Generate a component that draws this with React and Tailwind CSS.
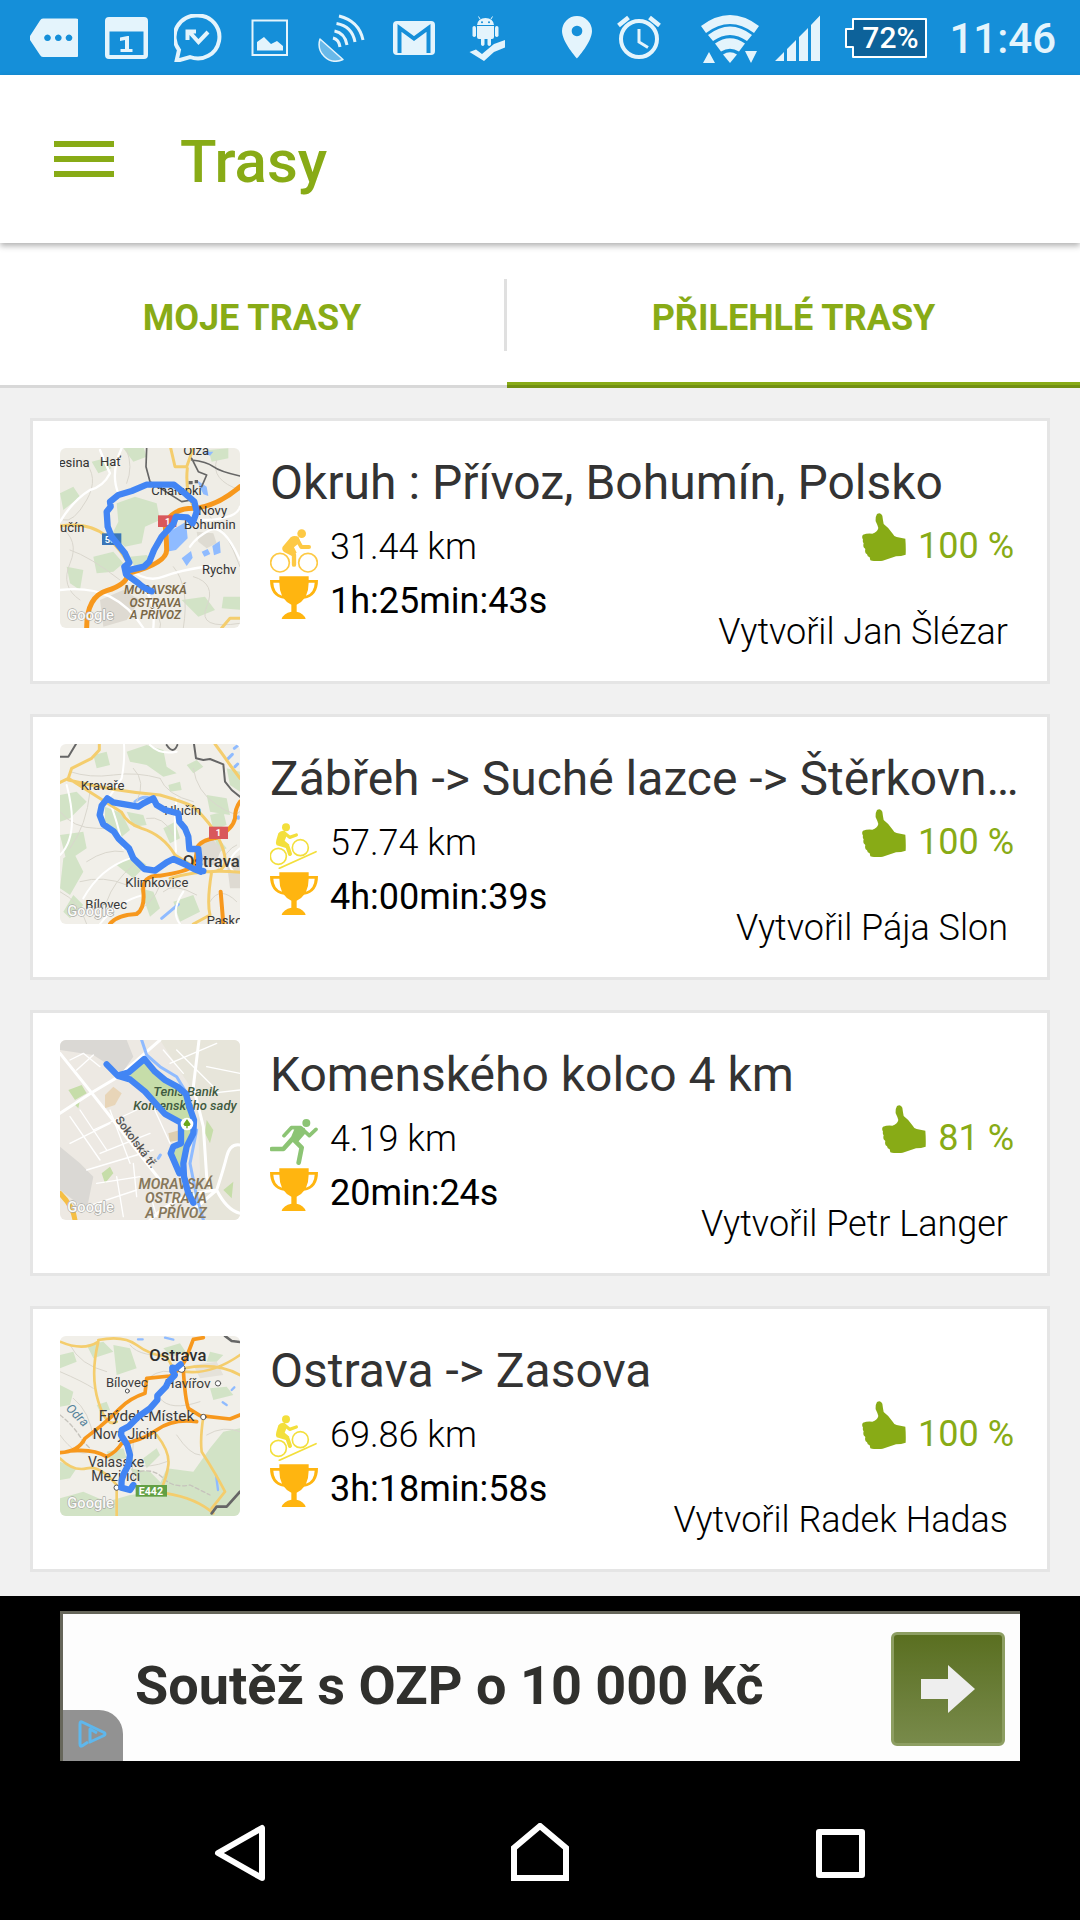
import React from "react";

const ICE = "#e4f4fc";

/* ---------- status bar ---------- */

function StatusIcon({ children }) {
  return (
    <svg viewBox="0 0 48 48" className="h-12 w-12 shrink-0" fill={ICE} aria-hidden="true">
      {children}
    </svg>
  );
}

function StatusBar() {
  return (
    <div className="flex h-[75px] items-center justify-between bg-[#158fd9] pr-6 pl-[30px]">
      <div className="flex gap-6">
        <StatusIcon>
          <path
            fillRule="evenodd"
            d="M13 4.5H46a3 3 0 0 1 3 3V40a3 3 0 0 1-3 3H13q-2 0-3-2L0 26v-4L10 6.500q1-2 3-2ZM17.500 20.500a3.300 3.300 0 1 0 .01 0ZM28.300 20.500a3.300 3.300 0 1 0 .01 0ZM39 20.500a3.300 3.300 0 1 0 .01 0Z"
          />
        </StatusIcon>
        <StatusIcon>
          <path
            fillRule="evenodd"
            d="M7 3H42a4 4 0 0 1 4 4V41a4 4 0 0 1-4 4H7a4 4 0 0 1-4-4V7a4 4 0 0 1 4-4ZM7.500 17.500V41H41.500V17.500Z"
          />
          <path d="M18 23.500 25.500 22H27V35h3.500v3H18.500V35H23V26l-5 1Z" />
        </StatusIcon>
        <StatusIcon>
          <path
            d="M24 1.500A21.500 21.500 0 1 1 16 43L2.500 47 5 36A21.500 21.500 0 0 1 24 1.500Z"
            fill="none"
            stroke={ICE}
            strokeWidth="4"
          />
          <path d="M15 17.500 24.500 28 34 18M13.500 26V17.500H22" fill="none" stroke={ICE} strokeWidth="4" />
        </StatusIcon>
        <StatusIcon>
          <path d="M6.500 6.500H41V41H6.500Z" fill="none" stroke={ICE} strokeWidth="2" />
          <path d="M11 36.500V28l7-5 7 7 6-3 6 5v4.500Z" />
        </StatusIcon>
        <StatusIcon>
          <path
            d="M2 25C-2 38 10 52 25 45.500Z"
            fill="#69b9e9"
            stroke={ICE}
            strokeWidth="1.500"
            strokeLinejoin="round"
          />
          <g fill="none" stroke={ICE} strokeWidth="3">
            <path d="M15 24Q21 25.500 22 33" />
            <path d="M16.500 17Q27 19 29 31" />
            <path d="M18.500 9.500Q34 12 37 28" />
            <path d="M21 2Q41 7 45 26" />
          </g>
        </StatusIcon>
        <StatusIcon>
          <rect x="3" y="7" width="42" height="34" rx="4" />
          <path d="M9.500 39V14L24 24.500 38.500 14V39" fill="none" stroke="#158fd9" strokeWidth="4" />
        </StatusIcon>
        <StatusIcon>
          <path d="M15 11q1-7 8.500-7t8.500 7ZM15 12H32V23a2 2 0 0 1-2 2h-1v5.500a1.800 1.800 0 0 1-3.500 0V25h-3v5.500a1.800 1.800 0 0 1-3.500 0V25h-2a2 2 0 0 1-2-2Z" />
          <rect x="10.500" y="12" width="3.500" height="11" rx="1.700" />
          <rect x="33" y="12" width="3.500" height="11" rx="1.700" />
          <path d="M18 5 16.500 2.500M29 5l1.500-2.500" stroke={ICE} strokeWidth="1" />
          <path d="M7.500 38 14 35.500l6 4.500L32 30l11-4v7.500L32 38 22 47Z" />
          <circle cx="20" cy="8.200" r="1" fill="#158fd9" />
          <circle cx="27" cy="8.200" r="1" fill="#158fd9" />
        </StatusIcon>
      </div>
      <div className="flex items-center">
        <svg viewBox="0 0 32 48" className="mr-6 h-12 w-8" fill={ICE} aria-hidden="true">
          <path
            fillRule="evenodd"
            d="M16 2A15 15 0 0 0 1 17C1 28 16 44.500 16 44.500S31 28 31 17A15 15 0 0 0 16 2ZM16 11.700a5.300 5.300 0 1 1-.01 0Z"
          />
        </svg>
        <svg viewBox="0 0 44 48" className="mr-[39px] h-12 w-11" fill="none" stroke={ICE} aria-hidden="true">
          <circle cx="22" cy="25" r="18" strokeWidth="4" />
          <path d="M22 15v13l9 5.500" strokeWidth="3" />
          <path d="M1.500 11.500 11.500 3.500M32.500 3.500l10 8" strokeWidth="4.500" />
        </svg>
        <svg viewBox="0 0 60 50" className="mr-[15px] h-[50px] w-[60px]" fill={ICE} aria-hidden="true">
          <path d="M1 13Q30-9 59 13L54 20Q30 2 6 20Z" />
          <path d="M8 22Q30 5 52 22L47 28Q30 16 13 28Z" />
          <path d="M15 30.500Q30 20 45 30.500L39 38.500Q30 33 21 38.500Z" />
          <path d="M23 41.500Q30 37 37 41.500L30 50Z" />
          <path d="M3 50 9 39l6 11ZM45 38H57L51 50Z" />
        </svg>
        <svg viewBox="0 0 46 48" className="mr-6 h-12 w-[46px]" fill={ICE} aria-hidden="true">
          <path d="M0 47 9 38v9ZM12 35l9-9V47H12ZM24 23l9-9V47H24ZM36 11 45 1.500V47H36Z" />
        </svg>
        <div className="mr-[22px] grid h-10 w-[82px] items-center justify-items-center">
          <svg viewBox="0 0 82 40" className="col-start-1 row-start-1 h-10 w-[82px]" aria-hidden="true">
            <path d="M8 1H81V39H8V29H1V11H8Z" fill="#0d629a" stroke="#fff" strokeWidth="2" strokeLinejoin="round" />
          </svg>
          <span className="col-start-1 row-start-1 pl-2 text-[30px] leading-10 font-medium text-white">72%</span>
        </div>
        <span className="pt-[3px] text-[42px] leading-[48px] font-medium text-[#e4f4fc]">11:46</span>
      </div>
    </div>
  );
}

/* ---------- map thumbnails ---------- */

function Map({ box, label, land, children }) {
  return (
    <svg
      viewBox={box}
      role="img"
      aria-label={label}
      className="h-[180px] w-[180px] shrink-0 rounded-md font-['Roboto',sans-serif]"
      strokeLinecap="round"
      strokeLinejoin="round"
      fill="none"
    >
      <rect x="0" y="0" width="600" height="600" fill={land} />
      {children}
    </svg>
  );
}

function Route({ d }) {
  return <path d={d} stroke="#4285f4" strokeWidth="19" />;
}

function Google({ y }) {
  return (
    <text
      x="52"
      y={y}
      fontSize="44"
      fontWeight="500"
      fill="#fafaf8"
      stroke="#a9a9a4"
      strokeWidth="4"
      paintOrder="stroke"
    >
      Google
    </text>
  );
}

function MapOkruh() {
  return (
    <Map box="30 24 540 540" label="Okruh : Přívoz, Bohumín, Polsko" land="#efede6">
      <g fill="#d2e3c6">
        <path d="M200 190l55-20 65 20 10 50-45 20-10 50-50 10-40-35 20-40ZM130 350l60-15 30 35-30 25-50 5ZM220 25l60-5 10 30-40 15ZM395 480l70-10 30 40-50 20ZM520 470h55v40l-60-5ZM30 160l40-20 20 30-50 40ZM125 65l40-10 20 30-40 15ZM50 380l50 10-10 60-30-20ZM475 30l60-5v30l-50 10ZM240 350l50-5 20 25-50 25Z" />
      </g>
      <path d="M440 275l50 5 10 30-30 15-25-20Z" fill="#dedbd2" />
      <path d="M150 480l70-30 50 30-40 60-70 20Z" fill="#dedad2" />
      <g fill="#8fbbff">
        <path d="M358 275l50-30 5 50-35 35-28 5ZM395 355l28-22 5 20-18 25ZM455 335l18-8 8 15-18 8ZM487 318l22-15 3 35-20 8ZM440 120l30 20 5 28-15-5ZM455 35l35 0-10 12Z" />
      </g>
      <g stroke="#d9d6cd" strokeWidth="3">
        <path d="M30 260Q90 300 60 370T90 480M100 60Q150 110 110 180T40 240M230 30Q250 80 230 130M430 410Q500 430 470 500T570 550M300 500Q340 540 330 564M370 380Q420 440 400 564M480 230Q530 270 570 380M60 330Q120 350 210 420M500 60Q480 120 570 150" />
      </g>
      <g stroke="#fff" strokeWidth="7">
        <path d="M150 30Q170 80 180 100Q160 140 120 150Q70 180 30 245M205 160Q180 100 215 24M235 385Q290 430 340 410T480 378M235 420Q320 440 310 564M420 320Q440 290 480 270T570 360M30 450Q120 440 180 470T280 564M450 240Q560 240 570 200" />
      </g>
      <g stroke="#f4cd6d" strokeWidth="9">
        <path d="M30 258Q120 245 170 290T238 380M362 24 375 80H410L430 24M412 85Q405 150 430 200M515 564 540 535H570" />
      </g>
      <path d="M110 564Q110 470 170 452T235 400Q350 370 350 330T345 250Q370 205 430 205Q500 200 570 140" stroke="#f7981d" strokeWidth="15" />
      <path d="M290 24 288 80 300 125 395 185 425 180M425 55l20 40 25 10-15 35M425 60Q470 65 490 80T570 108" stroke="#666" strokeWidth="5" />
      <path d="M416 123h12v10h-12ZM434 120h10v10h-10Z" fill="#666" />
      <g fill="#333" fontSize="39">
        <text x="26" y="80">esina</text>
        <text x="150" y="78">Hať</text>
        <text x="400" y="45">Olza</text>
        <text x="304" y="164">Chałupki</text>
        <text x="444" y="226">Novy</text>
        <text x="402" y="268">Bohumin</text>
        <text x="30" y="277">učín</text>
        <text x="456" y="401">Rychv</text>
      </g>
      <g fill="#7a6848" fontSize="36" fontStyle="italic" fontWeight="600" textAnchor="middle">
        <text x="316" y="463">MORAVSKÁ</text>
        <text x="316" y="500">OSTRAVA</text>
        <text x="316" y="536">A PŘÍVOZ</text>
      </g>
      <rect x="324" y="226" width="55" height="35" fill="#d9585b" />
      <text x="345" y="254" fontSize="28" fontWeight="700" fill="#fff">1</text>
      <rect x="156" y="280" width="58" height="35" fill="#3a76b8" />
      <text x="164" y="308" fontSize="28" fontWeight="700" fill="#fff">56</text>
      <Google y="540" />
      <Route d="M305 454Q280 445 262 427L228 403 223 380 238 368 225 340 205 315 185 290 173 260 170 215 182 200 180 185 205 165 245 153 290 134H372L402 158 433 185 440 215 428 250 412 232 378 230 370 252 335 290 312 330 298 365 282 380 230 392" />
    </Map>
  );
}

function MapZabreh() {
  return (
    <Map box="30 27 540 540" label="Zábřeh -> Suché lazce -> Štěrkovna" land="#f1efe9">
      <g fill="#d2e3c6">
        <path d="M230 50l60-20 50 15 10 50 30 20-40 10-50-35-50-10ZM30 180l50-10 30 30-50 50-30 10ZM30 300l70-10 10 50-60 40ZM40 370l30-20 30 60-40 70-30-20ZM200 390l50-30 40 30-40 40ZM130 60l40-10 10 40-40 10ZM470 180l60 10 10 50-60-10ZM410 90l30-15 20 20-30 20ZM480 240l40-10 10 40-40 15ZM340 280l35-20 15 50-30 15ZM270 460l40 10 20 50-30 25ZM370 500l60-20 20 50-60 30ZM530 100l40 10v60l-30-20ZM230 230l50 10 10 30-40 5ZM355 150l35-10 5 25-35 5ZM70 480l30 30-40 40-20-20ZM480 280l50 60-20 10Z" />
        <path d="M165 215l50 20 25 50-30 25-45-35Z" />
      </g>
      <path d="M445 330l40-20 30 30-20 50-45 0ZM530 380l40-20v100h-30Z" fill="#dedad2" />
      <g stroke="#8fbbff" strokeWidth="9">
        <path d="M255 200Q280 180 300 190M335 550 385 508M535 70l12-12M553 40l10-8M555 95l8-8M565 245v5" />
      </g>
      <g stroke="#d9d6cd" strokeWidth="3">
        <path d="M60 110Q120 130 190 120T330 130M30 230Q70 280 140 280T200 300M110 380Q170 340 220 350M250 100Q290 140 260 200M330 130Q350 180 430 200M430 100Q440 170 500 210T570 230M90 440Q160 420 230 450M170 500Q190 440 250 390M340 470Q370 440 440 480M240 540Q310 510 330 450M480 500Q510 450 560 500M30 470Q90 500 110 567M290 250Q340 240 370 300M120 170Q110 270 60 340M500 410Q530 340 560 330" />
      </g>
      <g stroke="#fff" strokeWidth="6">
        <path d="M222 27Q225 80 215 130L175 190M175 190Q200 250 220 340M380 190Q370 250 378 350M50 150Q90 300 30 360M100 490Q150 400 240 370M150 567Q200 500 280 480M300 30Q330 60 380 50M570 340Q520 380 550 410M400 470Q360 530 390 567" />
      </g>
      <g stroke="#f4cd6d" strokeWidth="9">
        <path d="M30 142 55 130Q180 210 215 232Q230 265 275 280Q340 300 375 360L440 400M55 130 65 100 125 70 148 45V27M55 135Q200 170 330 180Q400 200 430 215Q500 280 520 345T485 410M360 430Q460 400 570 412M485 410Q470 500 480 540L430 567M495 27Q520 60 540 90L570 130" />
      </g>
      <g stroke="#f7981d" strokeWidth="12">
        <path d="M180 567Q200 540 260 537Q285 520 280 470T330 422Q410 410 425 395T440 340Q450 315 500 308Q550 280 555 250Q555 220 570 200M512 470 520 567" />
      </g>
      <path d="M30 65H55L78 27M350 30Q370 60 382 30M432 27 438 70 460 75 480 72 520 88 525 140 545 165 570 185" stroke="#666" strokeWidth="6" />
      <g fill="#383838">
        <text x="92" y="165" fontSize="39">Kravaře</text>
        <text x="343" y="240" fontSize="39">Hlučín</text>
        <text x="226" y="456" fontSize="39">Klimkovice</text>
        <text x="106" y="522" fontSize="39">Bílovec</text>
        <text x="470" y="570" fontSize="39">Pasko</text>
        <text x="398" y="397" fontSize="50" fontWeight="500">Ostrava</text>
      </g>
      <rect x="477" y="275" width="57" height="37" fill="#d9585b" />
      <text x="497" y="303" fontSize="28" fontWeight="700" fill="#fff">1</text>
      <Google y="542" />
      <Route d="M453 410 432 402 410 390 370 372 350 382 315 407 283 402 250 370 237 340 205 310 192 290 160 268 149 240 155 212 172 190 190 202 265 215 280 205 310 190 320 210 345 225 385 235 388 260 405 280 415 305 418 342H445L448 370 447 405 460 408" />
    </Map>
  );
}

function MapKomenskeho() {
  return (
    <Map box="30 30 540 540" label="Komenského kolco 4 km" land="#ede9e3">
      <path d="M30 30H230L250 80 215 130 130 75 30 60ZM30 350 90 400 130 440 110 540 30 480Z" fill="#dad8d4" />
      <path d="M330 30 440 200 450 420 430 570H570V30Z" fill="#e7e5da" />
      <g fill="#c6dda9">
        <path d="M235 130 285 85 350 155 405 185 430 290 405 400 395 430 370 370 392 340V280L345 255 285 190ZM55 180l40-15 15 25-35 20ZM470 270l20 30-10 40-15-30ZM155 430l25-20 10 20-25 30ZM520 480l30-25-5 50ZM70 220l20-10-5 25Z" />
      </g>
      <path d="M165 195l25-25 25 20-20 35-30 10Z" fill="#e8d5b8" />
      <path d="M355 310l35-10 5 30-35 5Z" fill="#ddceb0" />
      <g stroke="#fff" strokeWidth="4">
        <path d="M60 90 100 70 150 110M80 120l50-45M90 240l80 120M60 260l90 130M180 240l60 160M130 300l130-60M150 370l150-60M60 340l120-60M110 420l200-60M140 460l130-20M200 440l20 120M250 400l10 100M310 230l50 110M340 60l60 70M360 100l140-60M380 60l120 120M470 110l100 20M480 190l90-10M110 530l150-50M300 490l20 70" />
      </g>
      <g stroke="#fff" strokeWidth="9">
        <path d="M30 70 122 185 330 450M30 250 122 190 205 140 330 30M447 30 430 170 460 290 470 440 485 480M570 345Q540 340 530 380T500 480L430 540M500 480Q530 540 570 550M300 570Q380 490 500 480" />
      </g>
      <path d="M30 490Q70 530 75 570" stroke="#f5bf45" strokeWidth="15" />
      <path d="M275 30 290 75 330 110 380 140 410 190M440 300 420 400 440 500 460 570M325 385l6-10" stroke="#8fbbff" strokeWidth="9" />
      <g fill="#3f5a3f" fontSize="39" fontStyle="italic" fontWeight="500">
        <text x="310" y="197">Tenis Banik</text>
        <text x="250" y="241">Komenského sady</text>
      </g>
      <text transform="translate(194 270) rotate(53)" fontSize="35" fontWeight="500" fill="#555">
        Sokolská tř.
      </text>
      <g fill="#86775a" fontSize="43" fontStyle="italic" fontWeight="600" textAnchor="middle">
        <text x="378" y="477">MORAVSKÁ</text>
        <text x="378" y="519">OSTRAVA</text>
        <text x="378" y="563">A PŘÍVOZ</text>
      </g>
      <Google y="546" />
      <Route d="M170 103 203 137 235 128 283 87 315 125 345 150 385 172 408 192 418 230 432 270 430 310 410 350 400 400 402 440 415 490 430 518M205 138 240 148 285 185 345 252 393 278V340L370 350 362 370 375 400 388 430" />
      <circle cx="411" cy="282" r="19" fill="#fff" />
      <path d="M411 267 422 283 418 288H413V295H409V288H404L400 283Z" fill="#6aa81c" />
    </Map>
  );
}

function MapZasova() {
  return (
    <Map box="30 33 540 540" label="Ostrava -> Zasova" land="#f1efe9">
      <g fill="#d2e3c6">
        <path d="M30 520 100 500 170 530 240 510 320 500 350 430 430 440 480 370 520 320 570 310V573H30ZM240 430l60 10 60 60-60 20ZM110 60l50-10 30 30-60 20ZM190 60l50 10 20 60-60 20ZM30 180l40 20-10 40-30 5ZM30 90l40-10 10 30-50 20ZM170 380l50-10 10 30-50 5ZM280 400l40-30 10 20-40 40ZM340 70l50-15 20 30-50 5ZM480 190l50-5 20 25-60 15ZM30 410l50 20-20 30-30 5ZM140 240l30-10 10 25-30 5ZM480 80l40 10-20 20-30 0Z" />
      </g>
      <path d="M430 120l70-10 20 40-70 10Z" fill="#e5e2da" />
      <g stroke="#8fbbff" strokeWidth="7">
        <path d="M264 43h14M345 38l25 6M518 232l12 8M498 450l6 45M545 195l8-8" />
      </g>
      <g stroke="#d9d6cd" strokeWidth="3">
        <path d="M30 140Q100 170 130 190M60 60Q90 120 170 140M70 220Q120 260 130 340M240 60Q270 100 380 90M330 220Q360 260 450 230M470 330Q520 300 570 320M250 350Q240 450 260 500M270 180Q320 130 360 140M380 330Q420 390 450 390M30 330Q80 400 120 380M350 410Q300 430 260 420" />
      </g>
      <path d="M30 270Q70 300 100 350L120 370M270 440Q310 430 340 460T420 480L480 510" stroke="#c6c3bc" strokeWidth="4" strokeDasharray="12 8" />
      <g stroke="#f4cd6d" strokeWidth="8">
        <path d="M30 50Q100 80 145 50Q120 150 145 230T200 290M145 45Q220 30 260 60T350 95L370 130M375 135Q470 160 570 90M400 130Q500 110 570 150M460 276Q450 340 455 380Q500 450 525 500L485 550M320 330Q360 380 355 420T330 500M30 400Q70 440 110 430T200 480V573M350 505Q440 520 490 565" />
      </g>
      <g stroke="#f7981d" strokeWidth="11">
        <path d="M30 383Q85 380 105 340L150 305Q180 280 210 250T285 205L290 160 360 153Q400 130 412 90L430 43 460 38M400 135Q405 220 415 250L450 272L540 282 570 270M60 378Q130 370 170 395Q200 380 215 355Q270 350 320 315T440 290" />
      </g>
      <path d="M570 500 530 545H500L485 565M525 33l20 15 25 3" stroke="#666" strokeWidth="8" />
      <g stroke="#555" strokeWidth="3" fill="#fff">
        <circle cx="232" cy="198" r="6" />
        <circle cx="504" cy="175" r="8" />
        <circle cx="460" cy="276" r="8" />
        <circle cx="200" cy="488" r="8" />
        <circle cx="394" cy="131" r="11" />
      </g>
      <g fill="#3c3c3c" fontSize="42">
        <text x="298" y="108" fontSize="50" fontWeight="500" fill="#2e2e2e">Ostrava</text>
        <text x="168" y="185" fontSize="39">Bílovec</text>
        <text x="344" y="188" fontSize="41">Havířov</text>
        <text x="146" y="289" fontSize="46">Frýdek-Místek</text>
        <text x="128" y="343">Nový Jicin</text>
        <text x="114" y="425">Valasske</text>
        <text x="124" y="468">Mezirici</text>
      </g>
      <text transform="translate(46 252) rotate(45)" fontSize="38" fontStyle="italic" fill="#56829a">
        Odra
      </text>
      <Google y="550" />
      <Route d="M392 118 378 130 367 128V138L375 150 355 170 348 185 322 212V225L300 250 265 275 235 305 215 315 213 330 232 360 240 390 235 420 222 445 215 465 214 488 240 495 250 480" />
      <rect x="257" y="480" width="94" height="35" fill="#62a044" />
      <text x="266" y="509" fontSize="32" fontWeight="700" fill="#fff">E442</text>
    </Map>
  );
}

/* ---------- activity icons ---------- */

function CyclingIcon() {
  return (
    <svg viewBox="60 285 144 144" className="h-12 w-12" fill="none" role="img" aria-label="Kolo">
      <g stroke="#fdc944" strokeLinecap="round" strokeLinejoin="round">
        <circle cx="90" cy="398" r="28" strokeWidth="5" />
        <circle cx="174" cy="398" r="28" strokeWidth="5" />
        <path d="M140 326 154 351H177" strokeWidth="12" />
        <path d="M118 360 132 374V404" strokeWidth="13" />
      </g>
      <path d="M98 350 122 322Q134 314 146 322L151 336 132 352 140 368 126 378 102 366Q94 358 98 350Z" fill="#fdc944" />
      <circle cx="155" cy="311" r="13" fill="#fdc944" />
    </svg>
  );
}

function MountainBikeIcon() {
  return (
    <svg viewBox="60 939 144 144" className="h-12 w-12" fill="none" role="img" aria-label="Horské kolo">
      <g stroke="#f3df3b" strokeLinecap="round" strokeLinejoin="round">
        <circle cx="85" cy="1045" r="24" strokeWidth="5" />
        <circle cx="151" cy="1019" r="24" strokeWidth="5" />
        <path d="M88 1081 198 1031" strokeWidth="5" />
        <path d="M102 974 119 988 139 981" strokeWidth="10" />
        <path d="M96 1004 112 1014 120 1038" strokeWidth="12" />
      </g>
      <path d="M85 976Q92 966 104 969L112 978 104 998 118 1010 108 1020 80 1012Q76 1004 79 996Z" fill="#f3df3b" />
      <circle cx="108" cy="958" r="12" fill="#f3df3b" />
    </svg>
  );
}

function RunningIcon() {
  return (
    <svg viewBox="60 51 144 144" className="h-12 w-12" fill="none" role="img" aria-label="Běh">
      <g stroke="#8cc474" strokeLinecap="round" strokeLinejoin="round">
        <path d="M102 107 124 83H152L178 107 198 88" strokeWidth="11" />
        <path d="M66 147H100L126 118" strokeWidth="14" />
        <path d="M134 122 155 143 146 188" strokeWidth="14" />
      </g>
      <path d="M136 80 164 84 168 98 142 128 118 124Z" fill="#8cc474" />
      <circle cx="169" cy="69" r="12" fill="#8cc474" />
    </svg>
  );
}

function TrophyIcon() {
  return (
    <svg viewBox="60 429 144 144" className="h-12 w-12" role="img" aria-label="Nejlepší čas">
      <path
        fill="#ffb510"
        fillRule="evenodd"
        d="M88 439H176V450H204Q204 500 162 506Q154 518 140 524V545Q162 550 167 567H95Q100 550 124 545V524Q110 518 102 506Q60 500 60 450H88ZM70 458Q71 489 96 497Q88 480 88 458ZM194 458H176Q176 480 168 497Q193 489 194 458Z"
      />
    </svg>
  );
}

function ThumbIcon() {
  return (
    <svg viewBox="666 249 132 144" className="h-12 w-11" aria-hidden="true">
      <path
        fill="#88ab16"
        d="M711 252Q722 245 727 257Q729 272 731 282Q745 292 757 310Q762 320 770 321L796 326Q798 350 797 374Q784 379 768 379L728 392Q704 395 691 391L689 382Q682 380 681 373L677 370Q674 364 676 357L671 352Q669 346 671 340Q667 335 669 329Q664 320 669 314Q682 309 697 311Q712 307 715 294Q712 284 707 274Q706 260 711 252Z"
      />
    </svg>
  );
}

/* ---------- content ---------- */

const routes = [
  { name: "Okruh : Přívoz, Bohumín, Polsko", km: "31.44 km", time: "1h:25min:43s", rating: "100 %", author: "Jan Šlézar", Thumb: MapOkruh, Sport: CyclingIcon },
  { name: "Zábřeh -> Suché lazce -> Štěrkovn…", km: "57.74 km", time: "4h:00min:39s", rating: "100 %", author: "Pája Slon", Thumb: MapZabreh, Sport: MountainBikeIcon },
  { name: "Komenského kolco 4 km", km: "4.19 km", time: "20min:24s", rating: "81 %", author: "Petr Langer", Thumb: MapKomenskeho, Sport: RunningIcon },
  { name: "Ostrava -> Zasova", km: "69.86 km", time: "3h:18min:58s", rating: "100 %", author: "Radek Hadas", Thumb: MapZasova, Sport: MountainBikeIcon },
];

function RouteCard({ name, km, time, rating, author, Thumb, Sport }) {
  return (
    <li className="flex gap-[30px] border-3 border-[#e5e5e5] bg-white px-[27px] pt-[27px] pb-[22px]">
      <Thumb />
      <div className="min-w-0 flex-1 pt-[7px]">
        <h2 className="truncate text-[48px] leading-[56px] text-[#333]">{name}</h2>
        <div className="mt-0.5 flex justify-between text-[36px] leading-[54px] text-black">
          <div className="flex gap-3">
            <div className="pt-3">
              <Sport />
              <TrophyIcon />
            </div>
            <div className="pt-[7px]">
              <p className="font-light">{km}</p>
              <p>{time}</p>
            </div>
          </div>
          <div className="flex flex-col items-end">
            <p className="flex gap-3 pr-1.5 text-[#88ab16]">
              <ThumbIcon />
              <span className="pt-1.5">{rating}</span>
            </p>
            <p className="mt-8 pr-3 font-light">Vytvořil {author}</p>
          </div>
        </div>
      </div>
    </li>
  );
}

function AdBanner() {
  return (
    <div className="bg-black px-[60px] pt-[15px]">
      <a
        href="#soutez"
        className="relative flex h-[150px] items-center justify-between border-t-3 border-l-3 border-[#66665a] bg-[#fdfdfd] pr-[15px] pl-[72px]"
      >
        <span className="pb-1 text-[54px] leading-[64px] font-bold text-[#30302d]">Soutěž s OZP o 10 000 Kč</span>
        <span className="mt-0.5 flex h-[114px] w-[114px] items-center justify-center rounded-md border-3 border-[#8d9e62] bg-linear-to-b from-[#5a6f20] to-[#788a4a]">
          <svg viewBox="0 0 54 48" className="h-12 w-[54px]" aria-hidden="true">
            <path d="M0 14H27V0L54 24 27 48V34H0Z" fill="#eee" />
          </svg>
        </span>
        <span className="absolute bottom-0 left-0 flex h-[51px] w-[60px] items-center justify-center rounded-tr-3xl bg-[#929292]">
          <svg viewBox="0 0 30 30" className="mb-1 h-[30px] w-[30px]" fill="none" stroke="#5fb7ec" aria-hidden="true">
            <path d="M10 23 4 27Q2 28 2 25V5Q2 2 4 3L26 13.500Q28 15 26 16.500L12 23V10L19 14" strokeWidth="3" strokeLinejoin="round" />
          </svg>
        </span>
      </a>
    </div>
  );
}

function NavBar() {
  return (
    <nav aria-label="Systém" className="flex h-[159px] items-center justify-around bg-black px-[90px] pt-6">
      <button type="button" aria-label="Zpět" className="flex w-[300px] justify-center">
        <svg viewBox="0 0 60 60" className="h-[60px] w-[60px]" fill="none" stroke="#fff" strokeWidth="6" strokeLinejoin="round">
          <path d="M52 5V55L8 30Z" />
        </svg>
      </button>
      <button type="button" aria-label="Domů" className="flex w-[300px] justify-center">
        <svg viewBox="0 0 60 60" className="h-[60px] w-[60px]" fill="none" stroke="#fff" strokeWidth="6">
          <path d="M4 55V25L30 3 56 25V55Z" />
        </svg>
      </button>
      <button type="button" aria-label="Přehled" className="flex w-[300px] justify-center">
        <svg viewBox="0 0 60 60" className="h-[60px] w-[60px]" fill="none" stroke="#fff" strokeWidth="6" strokeLinejoin="round">
          <path d="M9 9H52V52H9Z" />
        </svg>
      </button>
    </nav>
  );
}

export default function App() {
  return (
    <div className="flex min-h-screen flex-col bg-black font-['Roboto',sans-serif]">
      <StatusBar />
      <header className="relative flex h-[168px] items-center gap-[66px] bg-white px-[54px] shadow-[0_3px_6px_rgba(0,0,0,0.3)]">
        <button type="button" aria-label="Menu" className="flex w-[60px] flex-col gap-[9px]">
          <span className="h-1.5 bg-[#88ab16]" />
          <span className="h-1.5 bg-[#88ab16]" />
          <span className="h-1.5 bg-[#88ab16]" />
        </button>
        <h1 className="pt-[5px] text-[60px] leading-[72px] font-medium text-[#88ab16]">Trasy</h1>
      </header>
      <div role="tablist" className="flex h-[145px] bg-white text-[36px] leading-[42px] font-bold text-[#88ab16]">
        <button
          type="button"
          role="tab"
          aria-selected="false"
          className="flex flex-auto items-center justify-center border-b-3 border-[#d8d8d8] pt-0.5 whitespace-nowrap"
        >
          <span className="flex h-[72px] flex-1 items-center justify-center border-r-3 border-[#e0e0e0] px-[141px] pt-1.5">
            MOJE TRASY
          </span>
        </button>
        <button
          type="button"
          role="tab"
          aria-selected="true"
          className="flex flex-auto flex-col items-stretch whitespace-nowrap"
        >
          <span className="flex flex-1 items-center justify-center px-[143px] pt-[11px]">PŘILEHLÉ TRASY</span>
          <span className="h-[3px] bg-[#88ab16]" />
          <span className="h-[3px] bg-[#728f12]" />
        </button>
      </div>
      <main className="flex-1 bg-[#f1f1f1] px-[30px] pt-[30px] pb-6">
        <ul className="flex flex-col gap-[30px]">
          {routes.map((route) => (
            <RouteCard key={route.name} {...route} />
          ))}
        </ul>
      </main>
      <AdBanner />
      <NavBar />
    </div>
  );
}
